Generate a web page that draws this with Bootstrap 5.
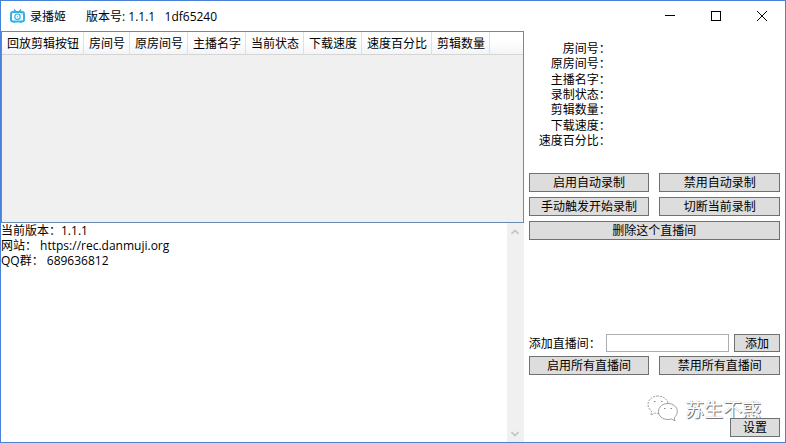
<!DOCTYPE html>
<html lang="zh-CN">
<head>
<meta charset="utf-8">
<meta name="viewport" content="width=device-width, initial-scale=1">
<title>录播姬</title>
<link href="https://cdn.jsdelivr.net/npm/bootstrap@5.3.0/dist/css/bootstrap.min.css" rel="stylesheet">
<style>
  body { font: 12px/15px "Open Sans", "Noto Sans CJK SC", sans-serif; color: #000; background: #fff; }
  .app-window { border: 1px solid #4a82d8; }
  .title-bar { height: 30px; padding-left: 9px; }
  .app-icon { margin-right: 5px; }
  .version { margin-left: 20px; white-space: pre; }
  .caption-btn { width: 46px; height: 30px; border: 0; background: none; padding: 0; }
  .rooms { flex: 13 1 0; border: 1px solid #688caf; background: #f0f0f0; }
  .log-pane { flex: 15 1 0; }
  .rooms-table { width: 100%; border-collapse: separate; border-spacing: 0; }
  .rooms-table th { height: 23px; padding: 1px 4px 0 5px; font-weight: 400; white-space: nowrap;
    border: 0 solid #dfe0e2; border-right-width: 1px; border-bottom: 1px solid #d5d5d5;
    background: linear-gradient(#fff 0%, #fff 40%, #f3f4f7 100%); }
  .rooms-table th:last-child { width: 100%; border-right: 0; }
  .log-text { border: 0; padding: 0; resize: none; outline: 0; overflow: hidden; color: #000; }
  .scroll-track { width: 17px; background: #f0f0f0; padding: 6px 0 5px; }
  .side { padding: 10px 5px 5px; }
  .details { width: 82px; height: 107px; }
  .actions { display: grid; grid-template-columns: 1fr 1fr; gap: 5px 10px; }
  .room-actions { margin-top: 25px; }
  .tool-btn { height: 19px; padding: 0 4px; border: 1px solid #707070; border-radius: 0; background: #ddd;
    color: #000; font-size: 12px; line-height: 15px; }
  .tool-btn:hover { background: #bee6fd; border-color: #3c7fb1; }
  .btn-span { grid-column: 1 / -1; }
  .add-row { gap: 5px; margin-bottom: 4px; }
  .add-row label { width: 72px; white-space: nowrap; }
  .room-input { width: 0; height: 18px; border: 1px solid #abadb3; border-radius: 0; padding: 0 2px; }
  .add-btn { width: 46px; height: 18px; }
  .settings-row { margin-top: 43px; }
  .settings-btn { width: 50px; z-index: 1; }
  .brand-overlay { right: 24px; bottom: 20px; gap: 7px; pointer-events: none; }
  .brand-name { font: 19px/24px "Noto Sans CJK SC", sans-serif; color: #fff; text-shadow: 1px 1px 0 #777, 0 0 1px #bbb; }
</style>
<script src="https://cdn.jsdelivr.net/npm/bootstrap@5.3.0/dist/js/bootstrap.bundle.min.js"></script>
</head>
<body>
<div class="app-window vh-100 d-flex flex-column position-relative">
  <header class="title-bar d-flex align-items-center flex-shrink-0">
    <svg class="app-icon" width="15" height="14" viewBox="0 0 15 14" fill="none" stroke="#35b0e6" aria-hidden="true">
      <path d="M4 0.5L6 3M11 0.5L9 3" stroke-width="1.5"/>
      <rect x="1" y="3" width="13" height="9.5" rx="2" stroke-width="2"/>
      <circle cx="7.5" cy="7.7" r="2.7" stroke-width="1.2"/>
      <path d="M7 7.7h1M11.3 5h1M3.5 13.5h1.5M10 13.5h1.5"/>
    </svg>
    <span>录播姬</span>
    <span class="version">版本号: 1.1.1   1df65240</span>
    <div class="ms-auto d-flex">
      <button type="button" class="caption-btn d-flex align-items-center justify-content-center" aria-label="最小化">
        <svg width="10" height="10" stroke="#000" shape-rendering="crispEdges"><path d="M0 4.5H10"/></svg>
      </button>
      <button type="button" class="caption-btn d-flex align-items-center justify-content-center" aria-label="最大化">
        <svg width="10" height="10" fill="none" stroke="#000" shape-rendering="crispEdges"><rect x=".5" y=".5" width="9" height="9"/></svg>
      </button>
      <button type="button" class="caption-btn d-flex align-items-center justify-content-center" aria-label="关闭">
        <svg width="10" height="10" stroke="#000"><path d="M0 0L10 10M10 0L0 10"/></svg>
      </button>
    </div>
  </header>

  <main class="row g-0 flex-grow-1">
    <section class="col-8 d-flex flex-column">
      <div class="rooms overflow-hidden">
        <table class="rooms-table">
          <thead>
            <tr>
              <th scope="col">回放剪辑按钮</th><th scope="col">房间号</th><th scope="col">原房间号</th><th scope="col">主播名字</th>
              <th scope="col">当前状态</th><th scope="col">下载速度</th><th scope="col">速度百分比</th><th scope="col">剪辑数量</th><th></th>
            </tr>
          </thead>
        </table>
      </div>
      <div class="log-pane d-flex">
        <textarea class="log-text flex-grow-1" readonly aria-label="日志">当前版本：1.1.1
网站： https://rec.danmuji.org
QQ群： 689636812</textarea>
        <div class="scroll-track d-flex flex-column justify-content-between align-items-center" aria-hidden="true">
          <svg width="8" height="6" fill="none" stroke="#c4c4c4" stroke-width="1.6"><path d="M.5 5L4 1.5L7.500 5"/></svg>
          <svg width="8" height="6" fill="none" stroke="#c4c4c4" stroke-width="1.6"><path d="M.5 1L4 4.500L7.500 1"/></svg>
        </div>
      </div>
    </section>

    <aside class="side col-4 d-flex flex-column">
      <div class="details d-flex flex-column justify-content-between text-end text-nowrap">
        <div>房间号：</div>
        <div>原房间号：</div>
        <div>主播名字：</div>
        <div>录制状态：</div>
        <div>剪辑数量：</div>
        <div>下载速度：</div>
        <div>速度百分比：</div>
      </div>
      <div class="actions room-actions">
        <button type="button" class="btn tool-btn">启用自动录制</button>
        <button type="button" class="btn tool-btn">禁用自动录制</button>
        <button type="button" class="btn tool-btn">手动触发开始录制</button>
        <button type="button" class="btn tool-btn">切断当前录制</button>
        <button type="button" class="btn tool-btn btn-span">删除这个直播间</button>
      </div>
      <div class="add-row d-flex align-items-center mt-auto">
        <label for="room">添加直播间：</label>
        <input id="room" type="text" class="room-input flex-grow-1">
        <button type="button" class="btn tool-btn add-btn flex-shrink-0">添加</button>
      </div>
      <div class="actions">
        <button type="button" class="btn tool-btn">启用所有直播间</button>
        <button type="button" class="btn tool-btn">禁用所有直播间</button>
      </div>
      <div class="settings-row d-flex justify-content-end">
        <button type="button" class="btn tool-btn settings-btn position-relative">设置</button>
      </div>
    </aside>
  </main>

  <div class="brand-overlay position-absolute d-flex align-items-center">
    <svg width="31" height="27" viewBox="0 0 31 27" fill="#fff" stroke="#888" stroke-width=".8" aria-hidden="true">
      <path stroke-dasharray="2 1" d="M11 1C5 1 1 5 1 9.500c0 3 1.500 5 3.500 6.500L4 20l4-2c1 .4 2.500.5 4 .5M21 8C20 4 16 1 11 1"/>
      <path d="M21 8.500c-5.500 0-9.500 3.500-9.500 8s4 8 9.500 8c1.500 0 2.500-.2 3.500-.6l3.500 2-.7-3.400c1.800-1.500 3-3.500 3-6 0-4.500-4-8-9.300-8z"/>
      <path stroke-width="1.200" d="M7 6.500h1.500M14 6.500h1.500M17 13.500h1.500M23.500 13.500h1.500"/>
    </svg>
    <span class="brand-name">苏生不惑</span>
  </div>
</div>
</body>
</html>
